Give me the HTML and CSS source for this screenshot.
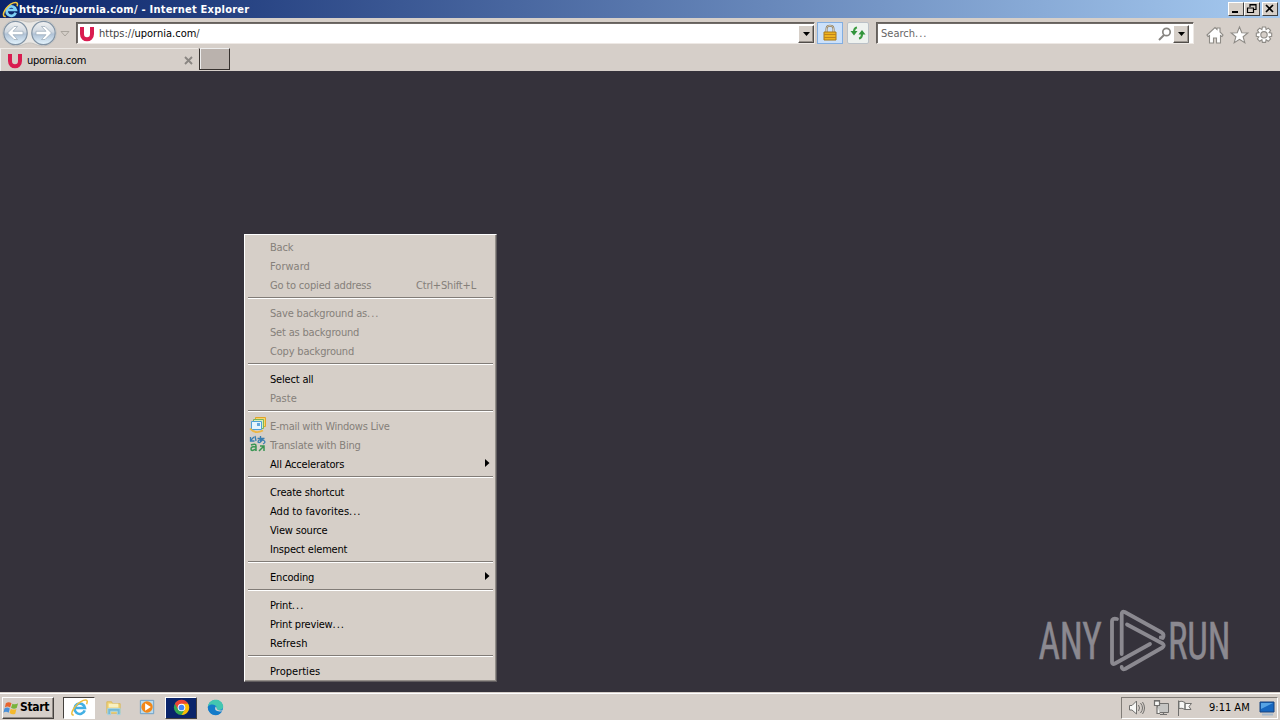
FILE: index.html
```html
<!DOCTYPE html>
<html lang="en">
<head>
<meta charset="utf-8">
<title>Internet Explorer</title>
<link rel="stylesheet" href="styles.css">
</head>
<body>
<div class="desktop">
  <header class="titlebar">
    <svg class="title-icon" viewBox="0 0 18 18"><path d="M14.500 12.500A5 5 0 1 1 14.700 9.500H6" fill="none" stroke="#7fd0f5" stroke-width="2.800"/><path d="M4 16.500C-2 17 4 5 12 2c4-1.500 5 .5 4 3.500" fill="none" stroke="#f5c83c" stroke-width="1.600"/></svg>
    <span class="title-text">https://upornia.com/ - Internet Explorer</span>
    <div class="window-buttons">
      <span class="win-btn"><svg viewBox="0 0 14 12"><path d="M3 9h6" stroke="#000" stroke-width="2"/></svg></span>
      <span class="win-btn"><svg viewBox="0 0 14 12"><path d="M5 4V1.500h6v5H9M5 2h6M2.500 5v4.500h6V5zM2 5h7" fill="none" stroke="#000" stroke-width="1.200"/></svg></span>
      <span class="win-btn close"><svg viewBox="0 0 14 12"><path d="M3 2l7 7M10 2L3 9" stroke="#000" stroke-width="1.700"/></svg></span>
    </div>
  </header>

  <nav class="toolbar">
    <svg class="nav-arrows" viewBox="0 0 76 30">
      <defs><linearGradient id="orb" x2="0" y2="1"><stop offset="0" stop-color="#f2f2f2"/><stop offset=".45" stop-color="#d0d8e1"/><stop offset=".55" stop-color="#b0c2d6"/><stop offset="1" stop-color="#e6f6ff"/></linearGradient></defs>
      <path d="M15.500 2C24 2 24 4 29 4S36 2 43.500 2a13 13 0 0 1 0 26c-8 0-8-3-14-3s-6 3-14 3a13 13 0 0 1 0-26z" fill="#e9e7e4" stroke="#c5c2be"/>
      <g fill="url(#orb)" stroke="#8293a4" stroke-width="1.200"><circle cx="15.500" cy="15" r="11.700"/><circle cx="43.500" cy="15" r="11.700"/></g>
      <path d="M7.500 15l6.500-6.500h3.500L13 13.300h10v3.400H13l4.500 4.800H14zM51.500 15L45 8.500h-3.500l4.500 4.800H36v3.400h10l-4.500 4.800H45z" fill="#fff" stroke="#99a9b8" stroke-width=".7"/>
      <path d="M61 13.500h8l-4 4.500z" fill="#d5cfc9" stroke="#aaa59e"/>
    </svg>
    <div class="address field">
      <svg class="u-icon" viewBox="0 0 16 16"><path d="M3 1v7c0 7 10 7 10 0V1" fill="none" stroke="#d91c50" stroke-width="4"/></svg>
      <span class="address-text"><i>https://</i>upornia.com<i>/</i></span>
      <span class="drop"><svg viewBox="0 0 9 5"><path d="M0 0h9L4.500 5z"/></svg></span>
    </div>
    <span class="lock"><svg viewBox="0 0 18 18"><path d="M5.500 9V5c0-4.500 7-4.500 7 0v4" fill="none" stroke="#8d7955" stroke-width="2"/><path d="M5.500 9V5c0-4.500 7-4.500 7 0v4" fill="none" stroke="#dedbd0" stroke-width=".8"/><path d="M3 8h12v8H3z" fill="#eeb31f" stroke="#a97816"/><path d="M3 10.500h12M3 13.500h12" stroke="#be841b"/></svg></span>
    <span class="refresh"><svg viewBox="0 0 18 18"><path d="M8 3.500Q5 4 5 8M10 14.500Q13 14 13 10" fill="none" stroke="#3d9d42" stroke-width="2.200"/><path d="M1.500 7h7L5 11.500zM9.500 10.500h7L13 6z" fill="#31943b"/></svg></span>
    <div class="search field">
      <span class="search-text">Search<span class="dots">...</span></span>
      <svg class="magnifier" viewBox="0 0 14 14"><circle cx="8.500" cy="5" r="3.700" fill="none" stroke="#878581" stroke-width="1.700"/><path d="M6 8l-5 5" stroke="#878581" stroke-width="2"/></svg>
      <span class="drop"><svg viewBox="0 0 9 5"><path d="M0 0h9L4.500 5z"/></svg></span>
    </div>
    <svg class="tools" viewBox="0 0 72 22" fill="#fff" stroke="#8e8b86" stroke-width="1.100">
      <path d="M2 11l8-7.500 2 2V4h3v4l3 3-1 1.500-1.500-1V19h-4v-5H8.500v5h-4v-7.500l-1.500 1z"/>
      <path d="M34.500 3l2.300 5.700 6 .2-4.700 3.800 1.700 6-5.300-3.400-5.300 3.400 1.700-6-4.700-3.800 6-.2z"/>
      <path fill-rule="evenodd" d="M57.400 3h3.200l.5 2.600 2.200-1.500 2.300 2.300-1.500 2.200 2.600.5v3.200l-2.600.5 1.500 2.200-2.300 2.300-2.200-1.500-.5 2.600h-3.200l-.5-2.600-2.200 1.500-2.300-2.300 1.500-2.200-2.600-.5V9.100l2.600-.5-1.500-2.200 2.300-2.300 2.200 1.500zM59 7.600a3.200 3.200 0 1 0 0 6.400 3.200 3.200 0 0 0 0-6.400z"/>
    </svg>
  </nav>

  <div class="tabs">
    <div class="tab">
      <svg class="u-icon" viewBox="0 0 16 16"><path d="M3 1v7c0 7 10 7 10 0V1" fill="none" stroke="#d91c50" stroke-width="4"/></svg>
      <span class="tab-text">upornia.com</span>
      <svg class="tab-close" viewBox="0 0 9 9"><path d="M1 1l7 7M8 1L1 8" stroke="#8a8682" stroke-width="1.900"/></svg>
    </div>
    <span class="new-tab"></span>
  </div>

  <main class="page">
    <svg class="watermark" viewBox="0 0 225 70">
      <g fill="#8b8990" stroke="#8b8990" stroke-width=".5" font-family="Roboto, sans-serif" font-size="51">
        <text transform="translate(3.500 54) scale(.73 1)">ANY</text>
        <text transform="translate(133 54) scale(.72 1)">RUN</text>
      </g>
      <g fill="none" stroke="#8b8990" stroke-width="3.800" stroke-linecap="round" stroke-linejoin="round">
        <path d="M86.700 49V9q0-3 3-2l37 20.500q3 2 1 5.500l-2-.5"/>
        <path d="M82 14q-5-1-5 2v41q0 3 3 1.500L115 39"/>
        <path d="M92 19.500l35.500 19q2.500 2 0 4L90 64q-3 1-3.300-2"/>
      </g>
    </svg>
  </main>

  <footer class="taskbar">
    <div class="start"><svg viewBox="0 0 18 18"><path d="M3 4q3-2 6 0L7.500 8.500q-3-2-5.500 0z" fill="#e8642c"/><path d="M10 4.500q3 1.500 6-.5L14.500 9q-3 1.500-6-.2z" fill="#78b43c"/><path d="M1.500 9.500q3-2 5.700 0L6 14q-3-2-5.500 0z" fill="#4a90d8"/><path d="M8.200 9.800q3 1.700 6 .2L13 15q-3 1.500-6-.7z" fill="#f4b92c"/></svg><span>Start</span></div>
    <span class="task ie"><svg viewBox="0 0 20 20"><path d="M15.500 13A5.500 5.500 0 1 1 15.700 10.500H6" fill="none" stroke="#43b0e4" stroke-width="2.800"/><path d="M4 18C-2 18 6 6 14 2.500c4-1.500 5 .5 3.500 4" fill="none" stroke="#edbd3d" stroke-width="1.600"/></svg></span>
    <span class="task folder"><svg viewBox="0 0 20 20"><path d="M3 4h5l1 2h8v10H3z" fill="#f2d477" stroke="#d9b75c"/><path d="M5 6h10v4H5z" fill="#f9f1c1"/><path d="M4 17.500V11h13v6.500h-3V14H7v3.500z" fill="#75b9d6" stroke="#a9d5e4"/></svg></span>
    <span class="task media"><svg viewBox="0 0 20 20"><path d="M2.500 2.500h14v14h-14z" fill="#b8dbef" stroke="#6d9fc5"/><circle cx="9.500" cy="9.500" r="6" fill="#f28718"/><path d="M7.500 5.500l6 4-6 4z" fill="#fff"/></svg></span>
    <span class="task chrome"><svg viewBox="0 0 20 20"><circle cx="10" cy="10" r="8" fill="#34a853"/><path d="M3 6a8 8 0 0 1 14 0l-7 4-3.500 2z" fill="#ea4335"/><path d="M10 6h7a8 8 0 0 1-7 12l3.500-6z" fill="#fbbc05"/><circle cx="10" cy="10" r="4" fill="#fff"/><circle cx="10" cy="10" r="3" fill="#4285f4"/></svg></span>
    <span class="task edge"><svg viewBox="0 0 20 20"><circle cx="10" cy="10" r="8" fill="#1686d2"/><path d="M2 9C3 0 16-1 18 8c1 5-6 6-7 3 1-4-5-5-9-2z" fill="#43c6b0"/><path d="M2 9c3-4 9-2 9 1-3 0-2 6 6 4-5 8-16 3-15-5z" fill="#147bc9"/><path d="M10 9q-2 6 7 5l1-1q-7 1-7-3z" fill="#d8d4cf"/></svg></span>
    <div class="tray">
      <svg class="tray-icons" viewBox="0 0 66 18" fill="#f8f8f6" stroke="#71706e">
        <path d="M1.500 6.500H4L8.500 2v13L4 11H1.500z"/><path d="M10.500 6q2 3 0 6M12.500 4q4 5 0 10M14.500 3q4 6 0 12" fill="none"/>
        <path d="M29.500 4.500h11v9h-11z" fill="#c5c5c3"/><path d="M32 15.500h7M35.500 13v2.500M26.500 1.500h5v5h-5zM29 7v7.500h3M28 1v2M30 1v2" stroke-width="1.200"/>
        <path d="M50.500 17V1.500M51 2.500q3-1 6 1v7q-3-2-6-1zM57 4.500h6.500L61 7.500l2 3h-6z"/>
      </svg>
      <span class="clock">9:11 AM</span>
      <svg class="monitor" viewBox="0 0 16 16"><path d="M1 2h14v10H1z" fill="#1767bf" stroke="#16427f"/><path d="M2 3h12L2 9z" fill="#56a3e4"/><path d="M3 14.500h11" stroke="#a4b8cc" stroke-width="2"/></svg>
    </div>
  </footer>

  <div class="menu">
    <div class="item off">Back</div>
    <div class="item off wide">Forward</div>
    <div class="item off">Go to copied address<span class="key">Ctrl+Shift+L</span></div>
    <div class="sep"></div>
    <div class="item off">Save background as<span class="dots">...</span></div>
    <div class="item off">Set as background</div>
    <div class="item off">Copy background</div>
    <div class="sep"></div>
    <div class="item">Select all</div>
    <div class="item off wide">Paste</div>
    <div class="sep"></div>
    <div class="item off tight"><svg class="item-icon" viewBox="0 0 18 18"><path d="M6.500 1.500h10v9h-10z" fill="#f6d66e" stroke="#e1a428"/><path d="M4.500 3.500h10v9h-10z" fill="#d8edba" stroke="#79b55a"/><path d="M2.500 5.500h10v8h-10z" fill="#e5f4fd" stroke="#4ca0d6"/><path d="M8 7h3v3H8z" fill="#63a7dc"/><path d="M1 12.500q5 6 13 2" fill="none" stroke="#edb643" stroke-width="1.800"/></svg>E-mail with Windows Live</div>
    <div class="item off"><svg class="item-icon" viewBox="0 0 18 18"><g fill="none" stroke="#397db0" stroke-width="1.300"><path d="M1.500 2v4h4M2 5l3-3M6 1l1 5"/><path d="M8.500 3.500h7M11.500 1v6M14 4q-3 5-5 3 0-3 5-2 4 2 0 4"/></g><g fill="none" stroke="#399552" stroke-width="1.500"><path d="M2 10q5-2 5 1v5M7 12q-5-1-5 2 0 3 5 0M11 11h4v5M15 11l-5 5"/></g></svg>Translate with Bing</div>
    <div class="item">All Accelerators<svg class="sub" viewBox="0 0 5 8"><path d="M0 0l4.500 4L0 8z"/></svg></div>
    <div class="sep"></div>
    <div class="item">Create shortcut</div>
    <div class="item wide">Add to favorites<span class="dots">...</span></div>
    <div class="item">View source</div>
    <div class="item">Inspect element</div>
    <div class="sep"></div>
    <div class="item">Encoding<svg class="sub" viewBox="0 0 5 8"><path d="M0 0l4.500 4L0 8z"/></svg></div>
    <div class="sep"></div>
    <div class="item">Print<span class="dots">...</span></div>
    <div class="item">Print preview<span class="dots">...</span></div>
    <div class="item wide">Refresh</div>
    <div class="sep"></div>
    <div class="item wide">Properties</div>
  </div>
</div>
</body>
</html>
```

FILE: styles.css
```css
* { box-sizing: border-box; }
body { margin: 0; font: 11px/15px "DejaVu Sans Condensed", "DejaVu Sans", sans-serif; font-stretch: condensed; letter-spacing: -.18px; color: #000; }
svg { display: block; flex: none; }
.desktop { position: relative; width: 1280px; height: 720px; display: flex; flex-direction: column; overflow: hidden; background: #d6cfc9; }
.titlebar { height: 18px; flex: none; display: flex; align-items: center; padding: 0 2px; background: linear-gradient(90deg, #0a246a, #a6caf0); color: #fff; }
.title-icon { width: 17px; height: 17px; }
.title-text { font-weight: bold; letter-spacing: .24px; white-space: nowrap; }
.window-buttons { margin-left: auto; display: flex; }
.win-btn { width: 16px; height: 14px; background: #d6cfc8; border: 1px solid; border-color: #fff #404040 #404040 #fff; }
.win-btn svg { width: 14px; height: 12px; }
.win-btn.close { margin-left: 2px; }
.toolbar { height: 30px; flex: none; display: flex; align-items: center; }
.nav-arrows { width: 76px; height: 30px; }
.field { height: 22px; background: #fff; border: 1px solid; border-color: #65605c #eee9e5 #eee9e5 #65605c; display: flex; align-items: center; box-shadow: inset 1px 1px #716c68; }
.address { width: 739px; padding: 1px 0 0 2px; }
.u-icon { width: 16px; height: 16px; }
.address-text { margin-left: 4px; letter-spacing: 0; }
.address-text i { font-style: normal; color: #444; }
.drop { width: 16px; height: 18px; margin-left: auto; display: grid; place-items: center; background: #d6cfc8; border: 1px solid; border-color: #fff #514d49 #514d49 #fff; box-shadow: inset -1px -1px #99938d; }
.drop svg { width: 7px; height: 4px; }
.lock { width: 26px; height: 22px; margin-left: 2px; display: grid; place-items: center; background: #cce1fa; border: 1px solid #82aee1; }
.lock svg, .refresh svg { width: 18px; height: 18px; }
.refresh { width: 22px; height: 22px; margin-left: 4px; display: grid; place-items: center; background: #eef2ef; border: 1px solid #bbc1c7; border-radius: 2px; }
.search { width: 318px; margin-left: 7px; padding: 1px 4px 0 4px; color: #666; }
.search-text { letter-spacing: 0; }
.dots { letter-spacing: 1px; }
.magnifier { width: 14px; height: 14px; margin-left: auto; }
.search .drop { margin-left: 1px; }
.tools { width: 72px; height: 22px; margin: 3px 0 0 11px; }
.tabs { height: 23px; flex: none; display: flex; }
.tab { width: 198px; height: 23px; display: flex; align-items: center; padding: 1px 5px 0 6px; border-left: 1px solid #eee; border-top: 1px solid #eeeae6; }
.tab-text { margin-left: 4px; letter-spacing: -.25px; }
.tab-close { width: 9px; height: 9px; margin-left: auto; }
.new-tab { width: 31px; height: 22px; margin-left: 1px; background: #bab2ad; border: 1px solid; border-color: #eee #36312e #36312e #36312e; box-shadow: inset 1px 0 #eee; }
.page { height: 621px; flex: none; background: #35323b; display: flex; align-items: flex-end; justify-content: flex-end; padding: 0 20px 17px 0; }
.watermark { width: 225px; height: 70px; }
.taskbar { height: 28px; flex: none; display: flex; align-items: center; padding: 2px 2px 0; border-top: 1px solid #d6cfc9; box-shadow: inset 0 1px #fff; }
.start { width: 52px; height: 22px; display: flex; align-items: center; border: 1px solid; border-color: #fff #45413e #45413e #fff; box-shadow: inset -1px -1px #918b86; font-weight: bold; font-size: 12px; letter-spacing: -.3px; }
.start svg { width: 17px; height: 18px; }
.task { width: 32px; height: 22px; display: grid; place-items: center; }
.task svg { width: 19px; height: 19px; }
.ie { margin-left: 9px; background: #fff; border: 1px solid; border-color: #45413e #fff #fff #45413e; }
.folder { margin-left: 2px; }
.media { margin-left: 2px; }
.chrome { margin-left: 2px; background: #0a246a; border: 1px solid; border-color: #fff #45413e #45413e #fff; }
.edge { margin-left: 2px; }
.tray { width: 157px; height: 22px; margin-left: auto; display: flex; align-items: center; border: 1px solid; border-color: #817c77 #fff #fff #817c77; padding-left: 6px; }
.tray-icons { width: 66px; height: 18px; }
.clock { width: 41px; margin-left: 15px; white-space: nowrap; letter-spacing: 0; }
.monitor { width: 16px; height: 16px; margin: 1px 0 0 9px; }
.menu { position: absolute; left: 244px; top: 234px; width: 253px; height: 448px; padding: 2px 2px 0; background: #d6cfc8; border: 1px solid; border-color: #fff #625e60 #625e60 #fff; box-shadow: inset -1px -1px #938e89; }
.item { position: relative; height: 19px; display: flex; align-items: center; padding: 1px 18px 0 23px; white-space: nowrap; }
.off { color: #85807a; }
.wide { letter-spacing: .02px; }
.tight { letter-spacing: -.26px; }
.key { margin-left: auto; }
.item-icon { position: absolute; left: 2px; top: 0; width: 18px; height: 18px; }
.sub { width: 5px; height: 8px; margin: 0 -14px 3px auto; }
.sep { height: 2px; margin: 3px 1px 4px; border-top: 1px solid #817c77; border-bottom: 1px solid #fff; }
```
